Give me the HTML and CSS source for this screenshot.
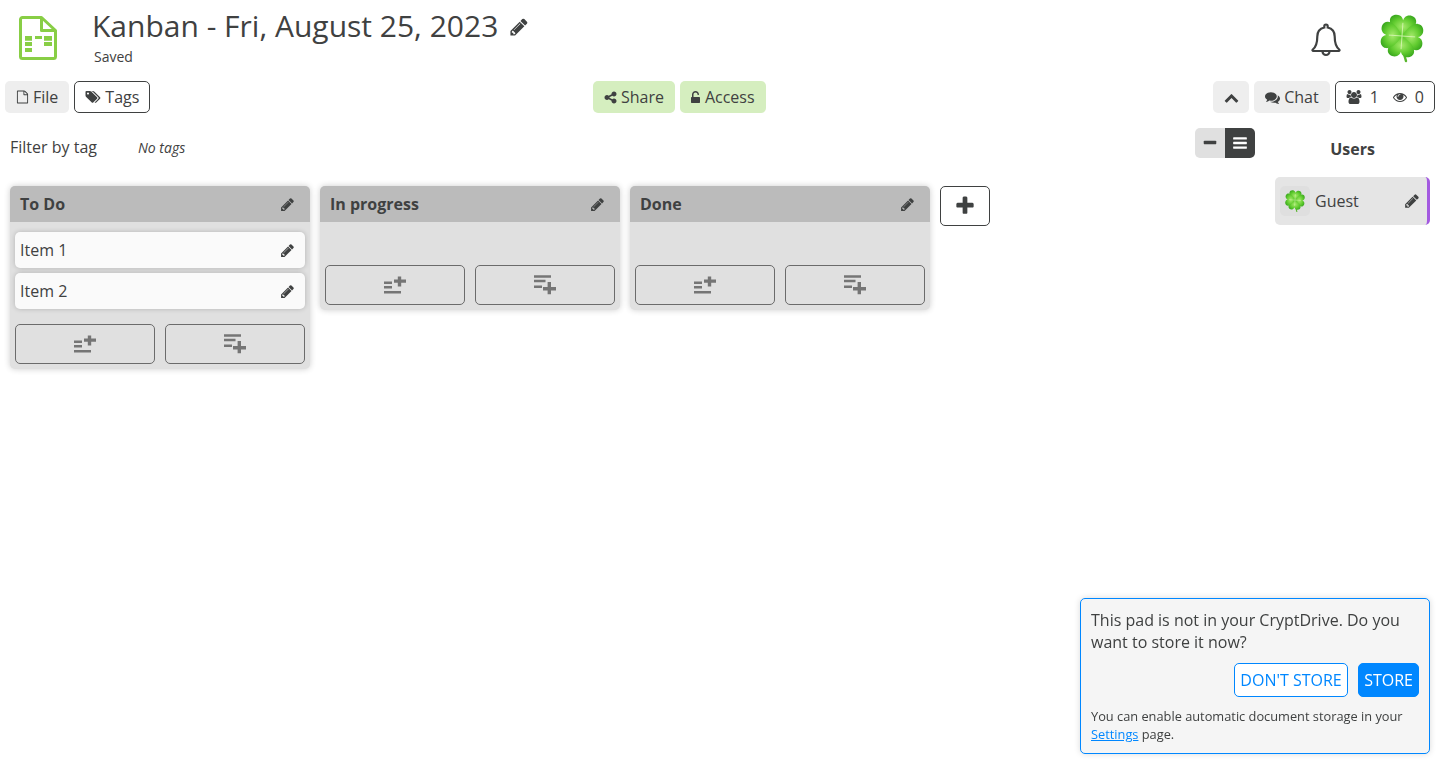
FILE: index.html
```html
<!DOCTYPE html>
<html lang="en">
<head>
    <meta charset="UTF-8">
    <meta name="viewport" content="width=device-width, initial-scale=1.0">
    <title>Kanban - Fri, August 25, 2023</title>
    <link rel="stylesheet" href="styles.css">
</head>
<body>
    <svg class="sprite" xmlns="http://www.w3.org/2000/svg">
        <defs>
            <radialGradient id="leafFill" cx="50%" cy="55%" r="62%">
                <stop offset="0" stop-color="#a6ea6c"/>
                <stop offset="0.6" stop-color="#62cc30"/>
                <stop offset="1" stop-color="#3aa81e"/>
            </radialGradient>
            <path id="leaf" d="M0 0C-5-3-15-9-15-17C-15-23-8-25-4-23C-2-22-1-21 0-18C1-21 2-22 4-23C8-25 15-23 15-17C15-9 5-3 0 0Z"/>
        </defs>
        <symbol id="i-pencil" viewBox="0 0 1792 1792"><path d="M491 1536l91-91-235-235-91 91v107h128v128h107zm523-928q0-22-22-22-10 0-17 7l-542 542q-7 7-7 17 0 22 22 22 10 0 17-7l542-542q7-7 7-17zm-54-192l416 416-832 832h-416v-416zm683 96q0 53-37 90l-166 166-416-416 166-165q36-38 90-38 53 0 91 38l235 234q37 39 37 91z"/></symbol>
        <symbol id="i-plus" viewBox="0 0 1792 1792"><path d="M1600 736v192q0 40-28 68t-68 28h-416v416q0 40-28 68t-68 28h-192q-40 0-68-28t-28-68v-416h-416q-40 0-68-28t-28-68v-192q0-40 28-68t68-28h416v-416q0-40 28-68t68-28h192q40 0 68 28t28 68v416h416q40 0 68 28t28 68z"/></symbol>
        <symbol id="i-minus" viewBox="0 0 1792 1792"><path d="M1600 736v192q0 40-28 68t-68 28h-1216q-40 0-68-28t-28-68v-192q0-40 28-68t68-28h1216q40 0 68 28t28 68z"/></symbol>
        <symbol id="i-bars" viewBox="0 0 1792 1792"><path d="M1664 1344v128q0 26-19 45t-45 19h-1408q-26 0-45-19t-19-45v-128q0-26 19-45t45-19h1408q26 0 45 19t19 45zm0-512v128q0 26-19 45t-45 19h-1408q-26 0-45-19t-19-45v-128q0-26 19-45t45-19h1408q26 0 45 19t19 45zm0-512v128q0 26-19 45t-45 19h-1408q-26 0-45-19t-19-45v-128q0-26 19-45t45-19h1408q26 0 45 19t19 45z"/></symbol>
        <symbol id="i-chevron" viewBox="0 0 1792 1792"><path d="M1683 1331l-166 165q-19 19-45 19t-45-19l-531-531-531 531q-19 19-45 19t-45-19l-166-165q-19-19-19-45.500t19-45.500l742-741q19-19 45-19t45 19l742 741q19 19 19 45.500t-19 45.500z"/></symbol>
        <symbol id="i-share" viewBox="64 64 1664 1664"><path d="M1344 1024q133 0 226.500 93.500t93.500 226.500-93.500 226.500-226.500 93.500-226.500-93.500-93.500-226.500q0-12 2-34l-360-180q-92 86-218 86-133 0-226.500-93.500t-93.500-226.500 93.500-226.500 226.500-93.500q126 0 218 86l360-180q-2-22-2-34 0-133 93.500-226.500t226.500-93.500 226.500 93.500 93.500 226.500-93.500 226.500-226.500 93.500q-126 0-218-86l-360 180q2 22 2 34t-2 34l360 180q92-86 218-86z"/></symbol>
        <symbol id="i-unlock" viewBox="320 0 1152 1536"><path d="M1376 768q40 0 68 28t28 68v576q0 40-28 68t-68 28h-960q-40 0-68-28t-28-68v-576q0-40 28-68t68-28h32v-320q0-185 131.500-316.500t316.500-131.500 316.500 131.500 131.500 316.500q0 26-19 45t-45 19h-64q-26 0-45-19t-19-45q0-106-75-181t-181-75-181 75-75 181v320h736z"/></symbol>
        <symbol id="i-file" viewBox="0 0 1792 1792"><path d="M1596 380q28 28 48 76t20 88v1152q0 40-28 68t-68 28h-1344q-40 0-68-28t-28-68v-1600q0-40 28-68t68-28h896q40 0 88 20t76 48zm-444-244v376h376q-10-29-22-41l-313-313q-12-12-41-22zm384 1528v-1024h-416q-40 0-68-28t-28-68v-416h-768v1536h1280z"/></symbol>
        <symbol id="i-tags" viewBox="0 0 1920 1792"><path d="M448 448q0-53-37.500-90.500t-90.500-37.500-90.500 37.500-37.500 90.500 37.500 90.500 90.500 37.500 90.500-37.500 37.500-90.500zm1067 576q0 53-37 90l-491 492q-39 37-91 37-53 0-90-37l-715-716q-38-37-64.500-101t-26.500-117v-416q0-52 38-90t90-38h416q53 0 117 26.500t102 64.500l715 714q37 39 37 91zm384 0q0 53-37 90l-491 492q-39 37-91 37-36 0-59-14t-53-45l470-470q37-37 37-90 0-52-37-91l-715-714q-38-38-102-64.500t-117-26.500h224q53 0 117 26.500t102 64.500l715 714q37 39 37 91z"/></symbol>
        <symbol id="i-comments" viewBox="0 0 1792 1792"><path d="M1408 768q0 139-94 257t-256.500 186.500-353.500 68.500q-86 0-176-16-124 88-278 128-36 9-86 16h-3q-11 0-20.500-8t-11.500-21q-1-3-1-6.500t.500-6.500 2-6l2.500-5 3.500-5.500 4-5 4.500-5 4-4.500q5-6 23-25t26-29.500 22.500-29 25-38.500 20.500-44q-124-72-195-177t-71-224q0-139 94-257t256.500-186.500 353.500-68.500 353.500 68.500 256.500 186.500 94 257zm384 256q0 120-71 224.500t-195 176.500q10 24 20.500 44t25 38.500 22.500 29 26 29.500 23 25q1 1 4 4.500t4.500 5 4 5 3.500 5.500l2.500 5 2 6 .500 6.500-1 6.500q-3 14-13 22t-22 7q-50-7-86-16-154-40-278-128-90 16-176 16-271 0-472-132 58 4 88 4 161 0 309-45t264-129q125-92 192-212t67-254q0-77-23-152 129 71 204 178t75 230z"/></symbol>
        <symbol id="i-users" viewBox="0 0 1920 1792"><path d="M593 896q-162 5-265 128h-134q-82 0-138-40.500t-56-118.500q0-353 124-353 6 0 43.500 21t97.500 42.500 119 21.500q67 0 133-23-5 37-5 66 0 139 81 256zm1071 637q0 120-73 189.500t-194 69.500h-874q-121 0-194-69.500t-73-189.500q0-53 3.500-103.500t14-109 26.500-108.500 43-97.500 62-81 85.500-53.500 111.500-20q10 0 43 21.500t73 48 107 48 135 21.500 135-21.500 107-48 73-48 43-21.500q61 0 111.500 20t85.500 53.500 62 81 43 97.500 26.500 108.500 14 109 3.500 103.500zm-1024-1277q0 106-75 181t-181 75-181-75-75-181 75-181 181-75 181 75 75 181zm704 384q0 159-112.500 271.500t-271.500 112.500-271.500-112.500-112.500-271.500 112.500-271.500 271.500-112.500 271.500 112.500 112.500 271.500zm576 225q0 78-56 118.500t-138 40.500h-134q-103-123-265-128 81-117 81-256 0-29-5-66 66 23 133 23 59 0 119-21.500t97.500-42.500 43.500-21q124 0 124 353zm-128-609q0 106-75 181t-181 75-181-75-75-181 75-181 181-75 181 75 75 181z"/></symbol>
        <symbol id="i-eye" viewBox="0 0 1792 1792"><path d="M1664 960q-152-236-381-353 61 104 61 225 0 185-131.500 316.500t-316.500 131.500-316.500-131.500-131.500-316.500q0-121 61-225-229 117-381 353 133 205 333.500 326.500t434.500 121.500 434.500-121.500 333.500-326.500zm-720-384q0-20-14-34t-34-14q-125 0-214.500 89.500t-89.500 214.500q0 20 14 34t34 14 34-14 14-34q0-86 61-147t147-61q20 0 34-14t14-34zm848 384q0 34-20 69-140 230-376.500 368.500t-499.500 138.500-499.500-139-376.500-368q-20-35-20-69t20-69q140-229 376.500-368t499.500-139 499.500 139 376.500 368q20 35 20 69z"/></symbol>
        <symbol id="i-add-top" viewBox="0 0 22 20"><path d="M0 6.500h8v2.400h-8zM0 11h8v2.400h-8zM0 16h17v2.500h-17zM13.800 1.500h3.400v3h4.800v3.300h-4.800v3.700h-3.400v-3.700h-3.800v-3.300h3.800z"/></symbol>
        <symbol id="i-add-end" viewBox="0 0 22 20"><path d="M0 .300h17v2.400h-17zM0 4.800h11.500v2.400h-11.500zM0 10.500h8v2.500h-8zM13.600 7h3.400v5h5v3.400h-5v3.900h-3.400v-3.900h-4.600v-3.400h4.600z"/></symbol>
        <symbol id="i-clover" viewBox="0 0 48 52">
            <path fill="none" stroke="#58b52c" stroke-width="2.400" stroke-linecap="round" d="M24 24C24.500 33 25.500 42 28 49"/>
            <g transform="translate(24 24) rotate(4) scale(.88)">
                <use href="#leaf" fill="url(#leafFill)"/>
                <use href="#leaf" fill="url(#leafFill)" transform="rotate(90)"/>
                <use href="#leaf" fill="url(#leafFill)" transform="rotate(180)"/>
                <use href="#leaf" fill="url(#leafFill)" transform="rotate(270)"/>
                <path fill="none" stroke="#d3f5ae" stroke-width="1" d="M0 0V-15M0 0H15M0 0V15M0 0H-15"/>
            </g>
        </symbol>
    </svg>

    <header class="top-bar">
        <svg class="app-icon" viewBox="0 0 38 44">
            <path class="app-icon-line" d="M3.500 1.500h19l14 13v26a2 2 0 0 1-2 2h-31a2 2 0 0 1-2-2v-37a2 2 0 0 1 2-2z"/>
            <path class="app-icon-line" d="M22.500 2v12.500h13.500"/>
            <path class="app-icon-cell" d="M6 20h7v4.700h-7zM16 20h7v3h-7zM25 20h8v4.700h-8zM6 26h7v4h-7zM25 26h8v4h-8zM6 32h7v4h-7z"/>
        </svg>
        <div class="title-block">
            <h1 class="pad-title">Kanban - Fri, August 25, 2023 <svg class="icon title-pencil"><use href="#i-pencil"/></svg></h1>
            <div class="save-state">Saved</div>
        </div>
        <svg class="bell" viewBox="0 0 30 36">
            <path d="M15 2.500c-1 0-1.700.7-1.700 1.700v1.300C8.800 6.500 6.300 10 6.300 14.500c0 7-1.400 10.500-4.500 13-.7.600-.3 1.500.5 1.500h25.400c.8 0 1.200-.9.500-1.500-3.100-2.500-4.500-6-4.500-13 0-4.500-2.500-8-7-9v-1.300c0-1-.7-1.700-1.700-1.700z"/>
            <path d="M11.500 29.500a3.500 3.500 0 0 0 7 0"/>
        </svg>
        <svg class="avatar"><use href="#i-clover"/></svg>
    </header>

    <nav class="toolbar">
        <div class="tool-group">
            <button class="tool-btn"><svg class="icon icon-file"><use href="#i-file"/></svg>File</button>
            <button class="tool-btn outlined"><svg class="icon icon-wide"><use href="#i-tags"/></svg>Tags</button>
        </div>
        <div class="tool-group center-group">
            <button class="tool-btn green"><svg class="icon icon-share"><use href="#i-share"/></svg>Share</button>
            <button class="tool-btn green access-btn"><svg class="icon icon-lock"><use href="#i-unlock"/></svg>Access</button>
        </div>
        <div class="tool-group">
            <button class="tool-btn square"><svg class="icon icon-chevron"><use href="#i-chevron"/></svg></button>
            <button class="tool-btn"><svg class="icon icon-chat"><use href="#i-comments"/></svg>Chat</button>
            <button class="tool-btn outlined user-count">
                <svg class="icon icon-wide"><use href="#i-users"/></svg><span class="count">1</span>
                <svg class="icon"><use href="#i-eye"/></svg><span>0</span>
            </button>
        </div>
    </nav>

    <div class="workspace">
        <main class="kanban">
            <div class="filter-row">
                <div class="filter-tags">
                    <span class="filter-label">Filter by tag</span>
                    <em class="no-tags">No tags</em>
                </div>
                <div class="view-toggle">
                    <span class="toggle-part"><svg class="icon"><use href="#i-minus"/></svg></span>
                    <span class="toggle-part active"><svg class="icon"><use href="#i-bars"/></svg></span>
                </div>
            </div>

            <div class="boards">
                <section class="board">
                    <div class="board-head"><span>To Do</span><svg class="icon"><use href="#i-pencil"/></svg></div>
                    <div class="board-items">
                        <div class="item"><span>Item 1</span><svg class="icon"><use href="#i-pencil"/></svg></div>
                        <div class="item"><span>Item 2</span><svg class="icon"><use href="#i-pencil"/></svg></div>
                    </div>
                    <div class="board-actions">
                        <button class="add-btn"><svg class="add-icon"><use href="#i-add-top"/></svg></button>
                        <button class="add-btn"><svg class="add-icon"><use href="#i-add-end"/></svg></button>
                    </div>
                </section>
                <section class="board">
                    <div class="board-head"><span>In progress</span><svg class="icon"><use href="#i-pencil"/></svg></div>
                    <div class="board-items"></div>
                    <div class="board-actions">
                        <button class="add-btn"><svg class="add-icon"><use href="#i-add-top"/></svg></button>
                        <button class="add-btn"><svg class="add-icon"><use href="#i-add-end"/></svg></button>
                    </div>
                </section>
                <section class="board">
                    <div class="board-head"><span>Done</span><svg class="icon"><use href="#i-pencil"/></svg></div>
                    <div class="board-items"></div>
                    <div class="board-actions">
                        <button class="add-btn"><svg class="add-icon"><use href="#i-add-top"/></svg></button>
                        <button class="add-btn"><svg class="add-icon"><use href="#i-add-end"/></svg></button>
                    </div>
                </section>
                <button class="add-board"><svg class="icon"><use href="#i-plus"/></svg></button>
            </div>
        </main>

        <aside class="users-panel">
            <h2 class="users-title">Users</h2>
            <div class="user-card">
                <span class="user-avatar"><svg><use href="#i-clover"/></svg></span>
                <span class="user-name">Guest</span>
                <svg class="icon"><use href="#i-pencil"/></svg>
            </div>
        </aside>
    </div>

    <div class="store-popup">
        <p class="store-question">This pad is not in your CryptDrive. Do you want to store it now?</p>
        <div class="store-actions">
            <button class="store-btn">DON'T STORE</button>
            <button class="store-btn primary">STORE</button>
        </div>
        <p class="store-note">You can enable automatic document storage in your <a href="#">Settings</a> page.</p>
    </div>
</body>
</html>
```
FILE: styles.css
```css
* {
    box-sizing: border-box;
}
html, body {
    height: 100%;
}
body {
    margin: 0;
    background: #fff;
    color: #3f4141;
    font-family: "Open Sans", "Liberation Sans", sans-serif;
    font-size: 16px;
    overflow: hidden;
}
button {
    font-family: inherit;
    color: inherit;
}
.sprite {
    position: absolute;
    width: 0;
    height: 0;
}
.icon {
    width: 14px;
    height: 14px;
    fill: currentColor;
    flex: none;
}
.icon-wide {
    width: 16px;
}
.icon-file {
    width: 13px;
}
.icon-share {
    width: 13px;
    height: 13px;
}
.icon-lock {
    width: 9px;
    height: 12px;
}
.icon-chevron {
    width: 15px;
    height: 15px;
}
.icon-chat {
    width: 15px;
    height: 15px;
}

/* top bar */
.top-bar {
    display: flex;
    height: 81px;
    padding: 0 10px 0 19px;
}
.app-icon {
    width: 38px;
    height: 44px;
    margin-top: 16px;
}
.app-icon-line {
    fill: none;
    stroke: #88ce45;
    stroke-width: 3;
    stroke-linejoin: round;
}
.app-icon-cell {
    fill: #88ce45;
}
.title-block {
    margin-left: 35px;
    flex: 1;
}
.pad-title {
    margin: 5px 0 0;
    font-size: 30px;
    font-weight: 400;
    line-height: 41px;
}
.title-pencil {
    width: 20px;
    height: 20px;
    margin-left: 3px;
}
.save-state {
    margin: 1px 0 0 2px;
    font-size: 14px;
    line-height: 19px;
}
.bell {
    width: 30px;
    height: 36px;
    margin-top: 22px;
    fill: none;
    stroke: #3f4141;
    stroke-width: 2.200;
}
.avatar {
    width: 48px;
    height: 52px;
    margin: 12px 4px 0 37px;
}

/* toolbar */
.toolbar {
    display: flex;
    justify-content: space-between;
    padding: 0 5px;
}
.tool-group {
    display: flex;
    gap: 5px;
}
.center-group {
    margin-right: 5px;
}
.tool-btn {
    display: flex;
    align-items: center;
    gap: 4px;
    height: 32px;
    padding: 0 10px;
    border: 1px solid transparent;
    border-radius: 5px;
    background: #eee;
    font-size: 16px;
}
.tool-btn.outlined {
    background: #fff;
    border-color: #3f4141;
}
.tool-btn.green {
    background: #d5eebf;
}
.tool-btn.access-btn {
    gap: 5px;
}
.tool-btn.square {
    width: 36px;
    justify-content: center;
}
.user-count {
    gap: 8px;
}
.user-count .count {
    margin-right: 6px;
}

/* kanban */
.workspace {
    display: flex;
}
.kanban {
    flex: 1;
    min-width: 0;
}
.filter-row {
    display: flex;
    justify-content: space-between;
    align-items: flex-start;
    height: 47px;
    margin-top: 15px;
    padding: 0 10px;
}
.filter-tags {
    display: flex;
    align-items: center;
    margin-top: 8px;
}
.filter-label {
    width: 128px;
}
.no-tags {
    font-size: 14px;
}
.view-toggle {
    display: flex;
    border-radius: 5px;
    overflow: hidden;
    margin-right: 10px;
}
.toggle-part {
    display: flex;
    align-items: center;
    justify-content: center;
    width: 30px;
    height: 30px;
    background: #e0e0e0;
}
.toggle-part.active {
    background: #3f4141;
    color: #fff;
}
.toggle-part .icon {
    width: 16px;
    height: 16px;
}
.boards {
    display: flex;
    align-items: flex-start;
    gap: 10px;
    padding: 11px 10px 0;
}
.board {
    width: 300px;
    padding-bottom: 5px;
    border-radius: 5px;
    background: #e0e0e0;
    box-shadow: 0 0 6px rgba(0, 0, 0, 0.2);
    overflow: hidden;
}
.board-head {
    display: flex;
    justify-content: space-between;
    align-items: center;
    height: 36px;
    padding: 0 15px 0 10px;
    background: #bbb;
    font-weight: 700;
}
.board-head .icon,
.item .icon {
    width: 15px;
    height: 15px;
}
.board-items {
    display: flex;
    flex-direction: column;
    gap: 5px;
    min-height: 43px;
    padding: 10px 5px 15px;
}
.item {
    display: flex;
    justify-content: space-between;
    align-items: center;
    height: 36px;
    padding: 0 10px 0 5px;
    border-radius: 5px;
    background: #fafafa;
    box-shadow: 0 0 5px rgba(0, 0, 0, 0.2);
}
.board-actions {
    display: flex;
    gap: 10px;
    padding: 0 5px;
}
.add-btn {
    display: flex;
    align-items: center;
    justify-content: center;
    flex: 1;
    height: 40px;
    padding: 0;
    border: 1px solid #6b6b6b;
    border-radius: 5px;
    background: transparent;
    color: #757575;
}
.add-icon {
    width: 22px;
    height: 20px;
    fill: currentColor;
}
.add-board {
    display: flex;
    align-items: center;
    justify-content: center;
    width: 50px;
    height: 40px;
    padding: 0;
    border: 1px solid #3f4141;
    border-radius: 5px;
    background: #fff;
}
.add-board .icon {
    width: 22px;
    height: 22px;
}

/* users */
.users-panel {
    width: 165px;
    padding-right: 10px;
}
.users-title {
    margin: 25px 0 0;
    font-size: 16px;
    line-height: 22px;
    text-align: center;
}
.user-card {
    display: flex;
    align-items: center;
    height: 48px;
    margin-top: 17px;
    padding: 0 7px 0 5px;
    border-right: 3px solid #a35ae0;
    border-radius: 5px;
    background: #e5e5e5;
}
.user-avatar {
    display: flex;
    align-items: center;
    justify-content: center;
    width: 30px;
    height: 30px;
    border-radius: 5px;
    background: #dfdfdf;
}
.user-avatar svg {
    width: 22px;
    height: 24px;
}
.user-name {
    flex: 1;
    margin-left: 5px;
}
.user-card .icon {
    width: 16px;
    height: 16px;
}

/* store popup */
.store-popup {
    position: fixed;
    right: 10px;
    bottom: 10px;
    width: 350px;
    height: 156px;
    padding: 10px;
    border: 1px solid #0087ff;
    border-radius: 5px;
    background: #f5f5f5;
    box-shadow: 0 0 6px rgba(0, 0, 0, 0.15);
}
.store-question {
    margin: 0;
    font-size: 16px;
    line-height: 22px;
}
.store-actions {
    display: flex;
    justify-content: flex-end;
    gap: 10px;
    margin-top: 10px;
}
.store-btn {
    height: 34px;
    padding: 0 5.500px;
    border: 1px solid #0087ff;
    border-radius: 5px;
    background: #fff;
    color: #0087ff;
    font-size: 16px;
}
.store-btn.primary {
    padding: 0 5px;
    background: #0087ff;
    color: #fff;
}
.store-note {
    margin: 10px 0 0;
    font-size: 12.800px;
    line-height: 18px;
}
.store-note a {
    color: #0087ff;
}
```
